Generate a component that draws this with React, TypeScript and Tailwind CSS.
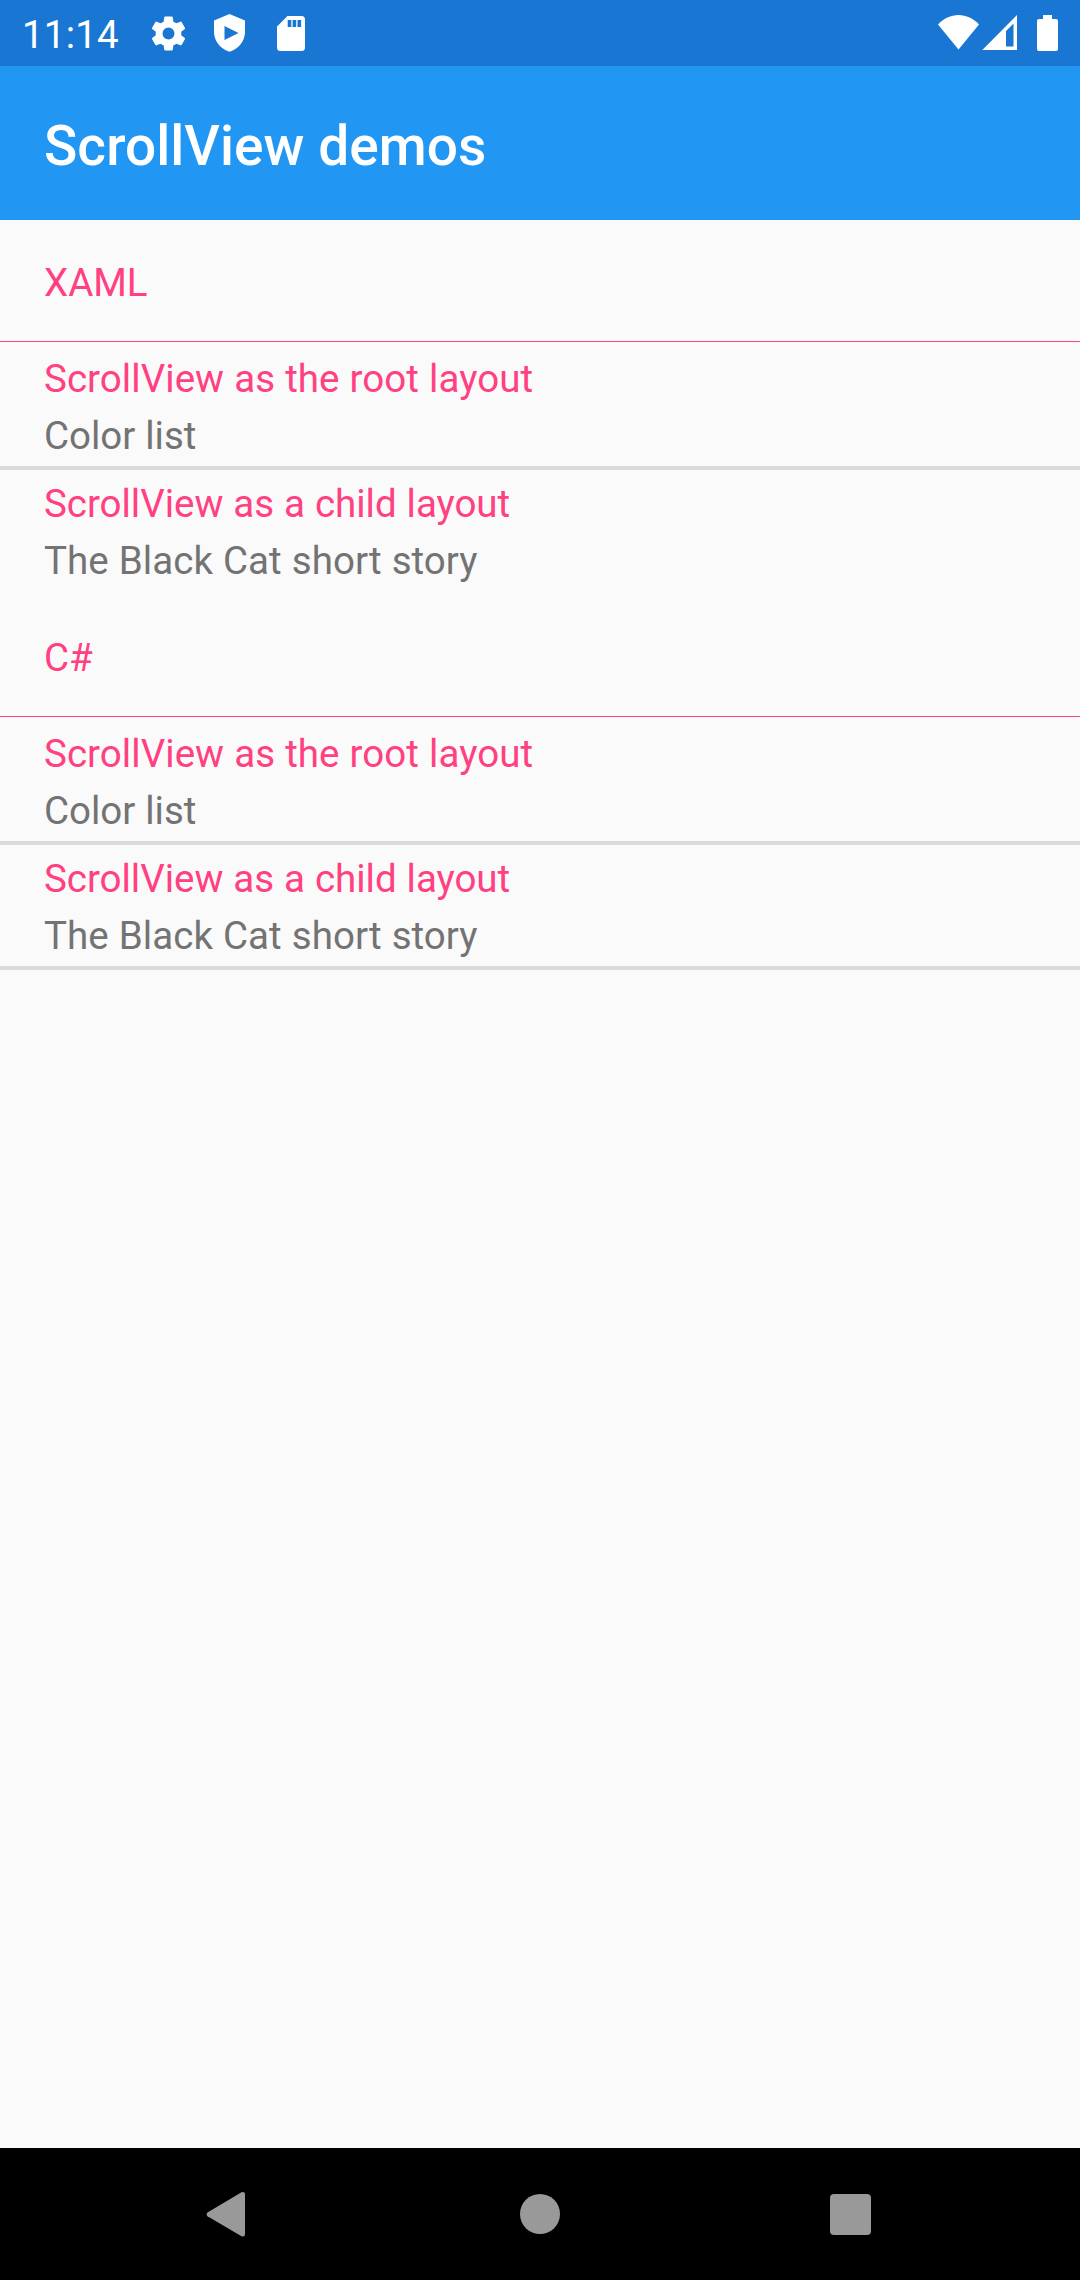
type Item = { title: string; detail: string; titleSpacing: string; detailSpacing: string };
type Section = { name: string; items: Item[] };

const items: Item[] = [
  {
    title: "ScrollView as the root layout",
    detail: "Color list",
    titleSpacing: "tracking-[0.05px]",
    detailSpacing: "tracking-[-0.03px]",
  },
  {
    title: "ScrollView as a child layout",
    detail: "The Black Cat short story",
    titleSpacing: "tracking-[-0.03px]",
    detailSpacing: "tracking-[0.04px]",
  },
];

const sections: Section[] = [
  { name: "XAML", items },
  { name: "C#", items },
];

function StatusBar() {
  return (
    <div className="flex h-[66px] shrink-0 items-center bg-[#1976d2] px-[22px] text-white">
      <span className="w-[96px] pt-[2px] text-[38.5px] leading-[45px] tracking-[0.2px] whitespace-nowrap">11:14</span>
      <svg className="ml-[30px] size-[41px]" viewBox="0 0 24 24" fill="currentColor">
        <path d="M19.43 12.98c.04-.32.07-.64.07-.98s-.03-.66-.07-.98l2.11-1.65c.19-.15.24-.42.12-.64l-2-3.46c-.12-.22-.39-.3-.61-.22l-2.49 1c-.52-.4-1.08-.73-1.69-.98l-.38-2.65C14.46 2.18 14.25 2 14 2h-4c-.25 0-.46.18-.49.42l-.38 2.65c-.61.25-1.17.59-1.69.98l-2.49-1c-.23-.09-.49 0-.61.22l-2 3.46c-.13.22-.07.49.12.64l2.11 1.65c-.04.32-.07.65-.07.98s.03.66.07.98l-2.11 1.65c-.19.15-.24.42-.12.64l2 3.46c.12.22.39.3.61.22l2.49-1c.52.4 1.08.73 1.69.98l.38 2.65c.03.24.24.42.49.42h4c.25 0 .46-.18.49-.42l.38-2.65c.61-.25 1.17-.59 1.69-.98l2.49 1c.23.09.49 0 .61-.22l2-3.46c.12-.22.07-.49-.12-.64l-2.11-1.65zM12 15.500a3.500 3.500 0 1 1 0-7 3.500 3.500 0 0 1 0 7z" />
      </svg>
      <svg className="ml-[20px] h-[38px] w-[41px]" viewBox="0 0 41 38" fill="currentColor">
        <path fillRule="evenodd" d="M20.500 0 36 6.500V18c0 9-6.500 17-15.500 19.800C11.500 35 5 27 5 18V6.500zM15.500 12v14l14-7z" />
      </svg>
      <svg className="mt-px ml-[26.500px] h-[35px] w-[28px]" viewBox="0 0 28 35" fill="currentColor">
        <path fillRule="evenodd" d="M10.500 0H24.500a3.500 3.500 0 0 1 3.500 3.500V31.500a3.500 3.500 0 0 1-3.500 3.500H3.500A3.500 3.500 0 0 1 0 31.500V10.500zM10.700 4v7h3.600V4zM15.600 4v7h3.600V4zM20.500 4v7h3.600V4z" />
      </svg>
      <svg className="ml-auto h-[36px] w-[42px]" viewBox="0 0 42 36" fill="currentColor">
        <path d="M0 9.500C5.500 3.500 13 0 20.500 0S35.500 3.500 41 9.500L20.500 34.500z" />
      </svg>
      <svg className="ml-[2px] h-[36px] w-[36px]" viewBox="0 0 36 36" fill="currentColor">
        <path fillRule="evenodd" d="M.3 35 35 0V35zM24 16V31.500H31.500V8.500z" />
      </svg>
      <svg className="ml-[19px] h-[36px] w-[21px]" viewBox="0 0 21 36" fill="currentColor">
        <path d="M6 0h9v4h4a2 2 0 0 1 2 2v28a2 2 0 0 1-2 2H2a2 2 0 0 1-2-2V6a2 2 0 0 1 2-2h4z" />
      </svg>
    </div>
  );
}

function Row({ item, divider }: { item: Item; divider: boolean }) {
  return (
    <li
      className={`h-[125px] px-[44px] pt-[11px] text-[38.5px] leading-[46px] [word-spacing:0.47px] ${
        divider ? "border-b-4 border-[#dadada]" : ""
      }`}
    >
      <p className={`text-[#ff4081] ${item.titleSpacing}`}>{item.title}</p>
      <p className={`mt-[11px] text-[#737373] ${item.detailSpacing}`}>{item.detail}</p>
    </li>
  );
}

export default function App() {
  return (
    <div className="flex h-[2280px] w-[1080px] flex-col overflow-hidden bg-[#fafafa] font-['Roboto',sans-serif]">
      <StatusBar />
      <header className="flex h-[154px] shrink-0 items-center bg-[#2196f3] px-[44px]">
        <h1 className="pt-[6px] text-[55px] leading-[64px] font-medium tracking-[0.06px] text-white">
          ScrollView demos
        </h1>
      </header>
      <main className="flex-1">
        {sections.map((section, s) => (
          <section key={section.name}>
            <h2 className="mb-[3px] flex h-[122px] items-center border-b border-[#ff4081] px-[44px] pt-[5px] text-[38.5px] leading-[46px] text-[#ff4081]">
              {section.name}
            </h2>
            <ul>
              {section.items.map((item, i) => (
                <Row key={item.title} item={item} divider={i === 0 || s === sections.length - 1} />
              ))}
            </ul>
          </section>
        ))}
      </main>
      <nav className="flex h-[132px] shrink-0 items-center bg-black pl-[206px] text-[#999999]">
        <svg className="h-[46px] w-[40px]" viewBox="0 0 40 46" fill="currentColor">
          <path d="M1.500 21.500 35.500 1.300Q39 .4 39 3.500V43Q39 46.300 35.500 45.300L1.500 25.300Q-.2 23.500 1.500 21.500z" />
        </svg>
        <span className="ml-[274px] size-[40px] rounded-full bg-[#999999]" />
        <span className="mt-px ml-[270px] size-[41px] rounded-[4px] bg-[#999999]" />
      </nav>
    </div>
  );
}
